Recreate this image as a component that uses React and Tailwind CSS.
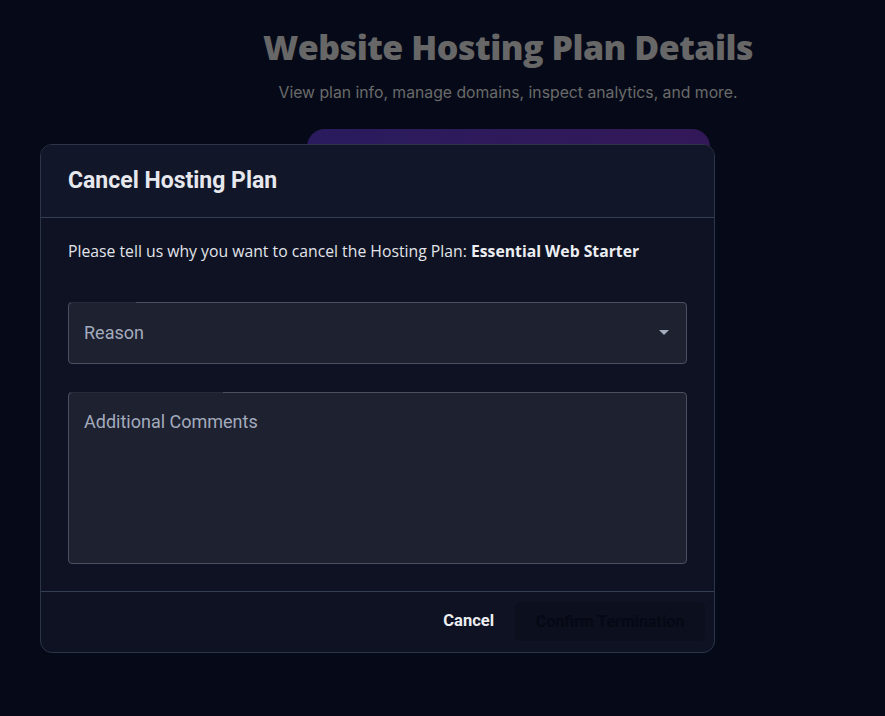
import React from "react";

export default function App() {
    return (
        <div className="relative min-h-[716px] w-full overflow-hidden bg-[#060a18]">
            {/* page behind the dialog */}
            <div className="pl-[131px] pt-[26px] text-center">
                <h1 className="text-[34px] font-extrabold leading-[42px] tracking-[-0.5px] text-[#676767]" style={{ fontFamily: "'Open Sans', 'Liberation Sans', sans-serif" }}>
                    Website Hosting Plan Details
                </h1>
                <p className="mt-[13px] text-[15.75px] text-[#6a6a6a]" style={{ fontFamily: "Inter, 'Liberation Sans', sans-serif" }}>
                    View plan info, manage domains, inspect analytics, and more.
                </p>
                <div className="mx-auto mt-[24px] h-[200px] w-[403px] rounded-[18px] bg-gradient-to-r from-[#291b5e] to-[#331858]" />
            </div>

            {/* dialog */}
            <div className="absolute left-[40px] top-[144px] w-[675px] overflow-hidden rounded-[12px] border border-[#2c3548] bg-[#0e1222]" style={{ fontFamily: "Roboto, 'Liberation Sans', sans-serif" }}>
                <div className="flex h-[73px] items-center border-b border-[#343e52] bg-[#111729] px-[27px]">
                    <h2 className="text-[23px] font-bold text-[#e6e8ee]">Cancel Hosting Plan</h2>
                </div>

                <div className="px-[27px] pt-[22px] pb-[27px]">
                    <p className="text-[15.75px] text-[#e2e4ea]" style={{ fontFamily: "'Open Sans', 'Liberation Sans', sans-serif" }}>
                        Please tell us why you want to cancel the Hosting Plan:{" "}
                        <span className="font-bold text-[#eceef2]">Essential Web Starter</span>
                    </p>

                    <div className="relative mt-[38px] flex h-[62px] items-center justify-between rounded-[4px] border border-[#4a5062] bg-[#1e2130] pl-[15px] pr-[17px]">
                        <span className="absolute left-[0px] top-[-1px] h-[1px] w-[67px] bg-[#262a3a]" />
                        <span className="text-[18px] text-[#a3abbd]">Reason</span>
                        <svg width="10" height="5" viewBox="0 0 10 5">
                            <path d="M0 0 L10 0 L5 5 Z" fill="#a3abbd" />
                        </svg>
                    </div>

                    <div className="relative mt-[28px] h-[172px] rounded-[4px] border border-[#4a5062] bg-[#1e2130] px-[15px] pt-[15px]">
                        <span className="absolute left-[0px] top-[-1px] h-[1px] w-[154px] bg-[#262a3a]" />
                        <span className="text-[18px] text-[#a3abbd]">Additional Comments</span>
                    </div>
                </div>

                <div className="flex h-[61px] items-center justify-end gap-[21px] border-t border-[#343e52] pr-[9px]">
                    <button className="text-[16.5px] font-bold text-[#eceef2]">Cancel</button>
                    <button className="h-[39px] w-[190px] rounded-[6px] bg-[#0b0f1e] text-[16px] font-bold text-[#060914]">
                        Confirm Termination
                    </button>
                </div>
            </div>
        </div>
    );
}
